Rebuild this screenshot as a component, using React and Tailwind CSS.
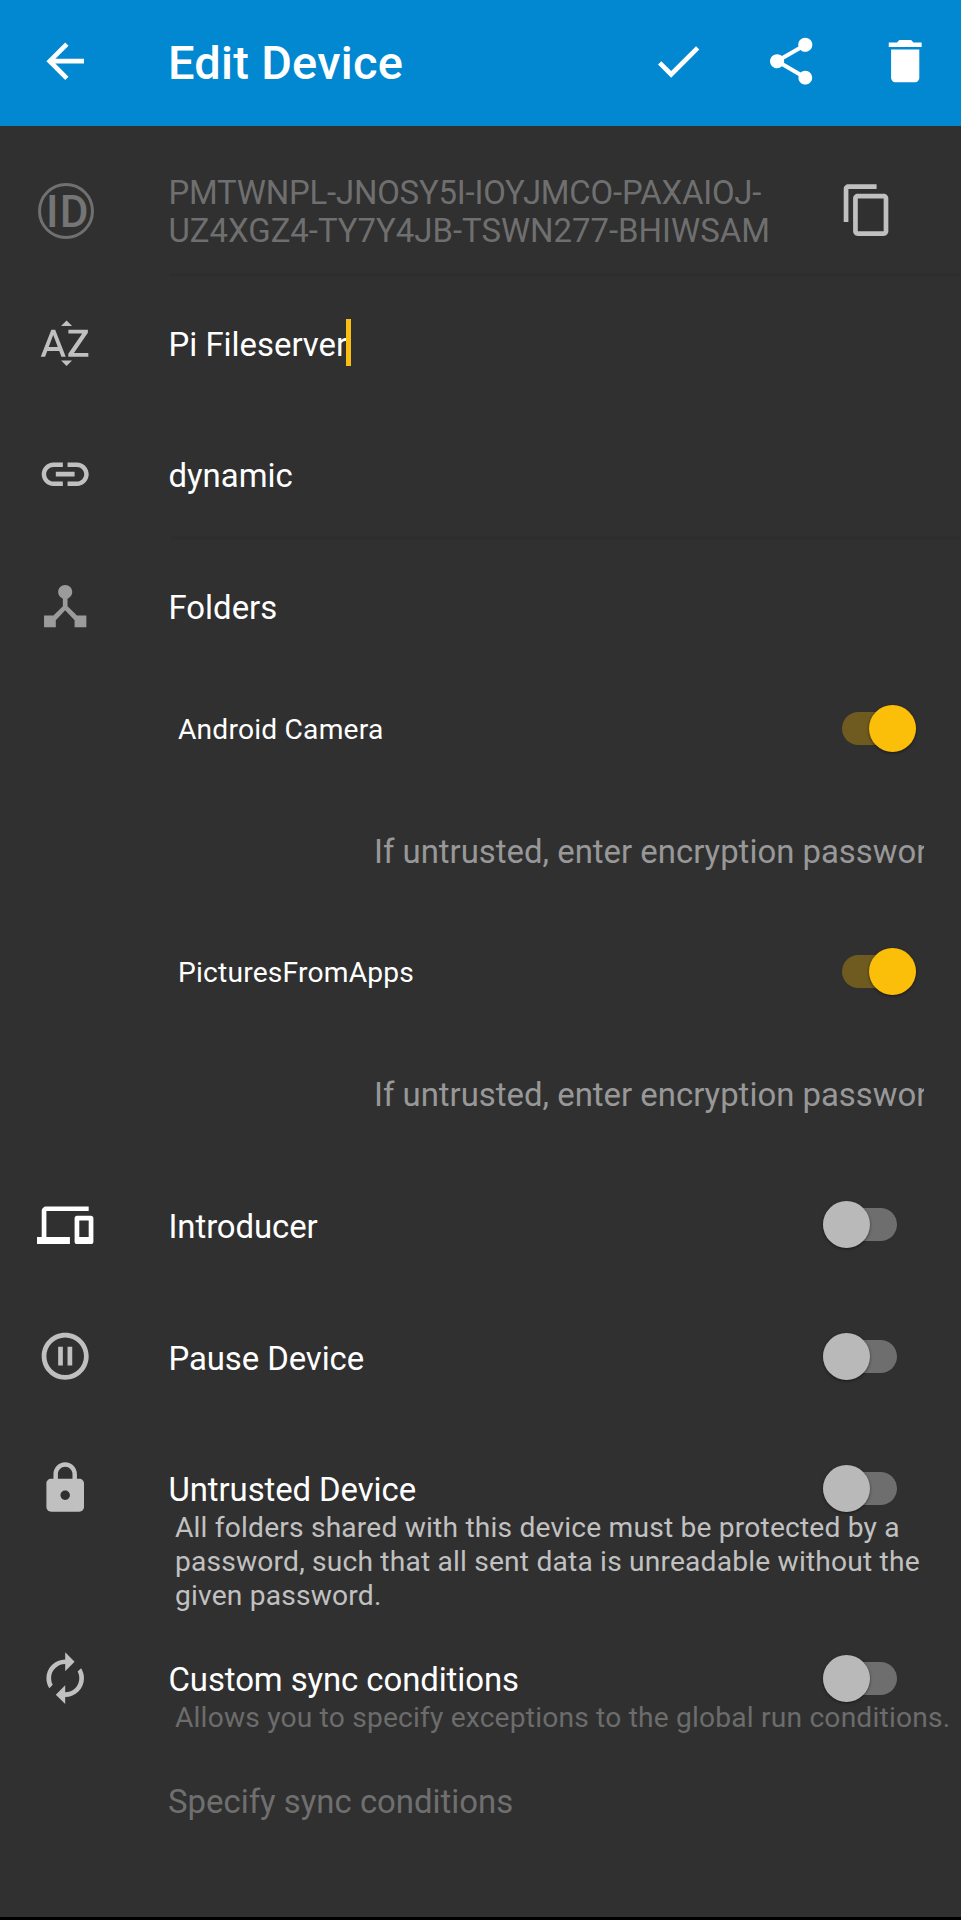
import {
  MdArrowBack,
  MdCheck,
  MdShare,
  MdDelete,
  MdContentCopy,
  MdSortByAlpha,
  MdLink,
  MdDeviceHub,
  MdDevices,
  MdPauseCircleOutline,
  MdLock,
  MdAutorenew,
} from 'react-icons/md';

const ICON = 'size-[56.4px] shrink-0';

function Toggle({ on = false }) {
  return on ? (
    <div className="flex h-[33px] w-[74px] shrink-0 items-center justify-end rounded-full bg-[#6f5b20]">
      <div className="size-[47px] shrink-0 rounded-full bg-[#fbbf09] shadow-[0_1px_3px_rgba(0,0,0,0.5)]" />
    </div>
  ) : (
    <div className="flex h-[33px] w-[74px] shrink-0 items-center rounded-full bg-[#6e6e6e]">
      <div className="size-[47px] shrink-0 rounded-full bg-[#b9b9b9] shadow-[0_1px_3px_rgba(0,0,0,0.5)]" />
    </div>
  );
}

function Row({ icon, children, trailing, className = 'h-[131.6px]' }) {
  return (
    <div className={`flex shrink-0 items-center ${className}`}>
      <div className="flex w-[131px] shrink-0 justify-center text-[#c0c0c0]">{icon}</div>
      <div className="flex flex-1 items-center pl-[37.5px] text-[32.9px] leading-[38px] text-white">{children}</div>
      {trailing}
    </div>
  );
}

function SwitchRow({ icon, label, className }) {
  return (
    <Row icon={icon} className={className} trailing={<div className="pr-[64px]"><Toggle /></div>}>
      <span className="pt-[4px] tracking-[-0.08px]">{label}</span>
    </Row>
  );
}

function Folder({ name }) {
  return (
    <>
      <div className="flex h-[113px] shrink-0 items-center justify-between pl-[178px] pr-[45px]">
        <span className="pt-[3px] text-[28.2px] leading-[34px] tracking-[0.2px] text-white">{name}</span>
        <Toggle on />
      </div>
      <div className="ml-[374px] mr-[37px] flex h-[130.2px] shrink-0 items-center overflow-hidden whitespace-nowrap pt-[4px] text-[32.9px] leading-[38px] text-[#989898]">
        <span>If untrusted, enter encryption password</span>
      </div>
    </>
  );
}

export default function App() {
  return (
    <div className="flex h-[1920px] w-[961px] flex-col overflow-hidden border-b-[3px] border-black bg-[#303030] font-['Roboto',sans-serif]">
      <header className="flex h-[126.4px] shrink-0 items-center bg-[#0288d1] pb-[5px] text-white">
        <div className="flex w-[131px] justify-center">
          <MdArrowBack className={ICON} />
        </div>
        <h1 className="flex-1 pl-[37px] pt-[3px] text-[47px] font-medium leading-[55px] tracking-[0.25px]">Edit Device</h1>
        <div className="flex gap-[56.8px] pr-[28px]">
          <MdCheck className={ICON} />
          <MdShare className={ICON} />
          <MdDelete className={ICON} />
        </div>
      </header>

      <Row
        className="h-[150.6px] pt-[18px]"
        icon={
          <div className="flex size-[56px] items-center justify-center rounded-full border-[3px] border-[#707070] pl-[5px] text-[44px] font-medium leading-none tracking-[1.5px] text-[#757575]">
            <span className="pt-[3px]">ID</span>
          </div>
        }
        trailing={
          <div className="pr-[66px] text-[#c0c0c0]">
            <MdContentCopy className={ICON} />
          </div>
        }
      >
        <span className="pt-[3px] text-[#6f6f6f]">
          <span className="tracking-[-0.2px]">PMTWNPL-JNOSY5I-IOYJMCO-PAXAIOJ-</span>
          <br />
          UZ4XGZ4-TY7Y4JB-TSWN277-BHIWSAM
        </span>
      </Row>
      <div className="-mt-[4px] ml-[170px] h-[4px] shrink-0 bg-[#2e2e2e]" />
      <Row icon={<MdSortByAlpha className={ICON} />}>
        <span className="pt-[4px]">Pi Fileserver</span>
        <span className="-ml-px h-[47px] w-[5px] bg-[#f9bd14]" />
      </Row>
      <Row icon={<MdLink className={ICON} />}>
        <span className="pt-[4px]">dynamic</span>
      </Row>
      <div className="-mt-[4px] ml-[170px] h-[4px] shrink-0 bg-[#2e2e2e]" />
      <Row icon={<MdDeviceHub className={`${ICON} text-[#9b9b9b]`} />}>
        <span className="pt-[4px]">Folders</span>
      </Row>

      <Folder name="Android Camera" />
      <Folder name="PicturesFromApps" />

      <SwitchRow
        className="h-[132.6px] pt-px"
        icon={<MdDevices className={`${ICON} text-white`} />}
        label="Introducer"
      />
      <SwitchRow icon={<MdPauseCircleOutline className={ICON} />} label="Pause Device" />
      <SwitchRow icon={<MdLock className={ICON} />} label="Untrusted Device" />
      <p className="-mt-[43px] ml-[175px] shrink-0 whitespace-nowrap text-[28.2px] leading-[33.8px] tracking-[0.18px] text-[#c1c1c1]">
        All folders shared with this device must be protected by a
        <br />
        password, such that all sent data is unreadable without the
        <br />
        given password.
      </p>
      <SwitchRow icon={<MdAutorenew className={ICON} />} label="Custom sync conditions" />
      <p className="-mt-[43px] ml-[175px] shrink-0 whitespace-nowrap text-[28.2px] leading-[33.8px] tracking-[0.18px] text-[#6c6c6c]">
        Allows you to specify exceptions to the global run conditions.
      </p>
      <p className="ml-[168px] mt-[48.5px] shrink-0 text-[32.9px] leading-[38px] text-[#6f6f6f]">Specify sync conditions</p>
    </div>
  );
}
